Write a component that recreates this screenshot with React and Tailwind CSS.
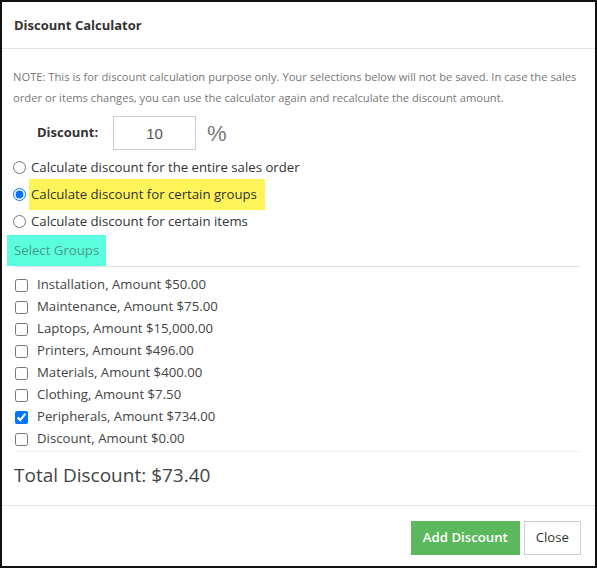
import { useState } from "react";

const groups = [
  { name: "Installation", amount: "$50.00" },
  { name: "Maintenance", amount: "$75.00" },
  { name: "Laptops", amount: "$15,000.00" },
  { name: "Printers", amount: "$496.00" },
  { name: "Materials", amount: "$400.00" },
  { name: "Clothing", amount: "$7.50" },
  { name: "Peripherals", amount: "$734.00", checked: true },
  { name: "Discount", amount: "$0.00" },
];

const modes = [
  "Calculate discount for the entire sales order",
  "Calculate discount for certain groups",
  "Calculate discount for certain items",
];

export default function App() {
  const [mode, setMode] = useState(1);

  return (
    <div className="h-[568px] w-[597px] border-2 border-[#111] bg-white font-['Open_Sans',sans-serif] text-[#333]">
      <div className="flex h-[47px] items-center border-b border-[#e5e5e5] px-[12px] pt-[1px]">
        <h2 className="text-[13px] font-bold text-[#333]">Discount Calculator</h2>
      </div>

      <div className="px-[11px] pt-[17px]">
        <p className="text-[11.2px] leading-[21px] text-[#777]">
          NOTE: This is for discount calculation purpose only. Your selections below will not be saved. In case the sales
          order or items changes, you can use the calculator again and recalculate the discount amount.
        </p>

        <div className="mt-[8px] flex h-[34px] items-center">
          <label className="w-[100px] pl-[24px] text-[13px] font-bold">Discount:</label>
          <input
            defaultValue="10"
            className="h-[34px] w-[83px] border border-[#ccc] text-center font-['Liberation_Sans',sans-serif] text-[15px] text-[#555] outline-none"
          />
          <span className="ml-[11px] font-['Liberation_Sans',sans-serif] text-[22px] text-[#777]">%</span>
        </div>

        <div className="mt-[4px] flex flex-col">
          {modes.map((m, i) => (
            <label key={m} className="flex h-[27px] items-center">
              <input
                type="radio"
                name="mode"
                checked={mode === i}
                onChange={() => setMode(i)}
                className="m-0 h-[13px] w-[13px] accent-[#0075ff]"
              />
              <span
                className={`ml-[3px] flex h-[31px] items-center px-[2px] text-[13.2px] ${
                  i === 1 ? "bg-[#fff35a] pr-[8px]" : ""
                }`}
              >
                {m}
              </span>
            </label>
          ))}
        </div>

        <div className="-ml-[6px] flex">
          <span className="flex h-[31px] items-center bg-[#5bffdf] px-[7px] text-[13.2px] text-[#4a9a8a]">Select Groups</span>
        </div>

        <div className="ml-[2px] mr-[4px] border-t border-[#e0e0e0] pt-[7px]">
          {groups.map((g) => (
            <label key={g.name} className="flex h-[22px] items-center">
              <input
                type="checkbox"
                defaultChecked={g.checked}
                className="m-0 h-[13px] w-[13px] accent-[#0075ff]"
              />
              <span className="ml-[9px] text-[13.2px] text-[#444]">
                {g.name}, Amount {g.amount}
              </span>
            </label>
          ))}
          <div className="mt-[1px] border-t border-[#eeeeee]" />
        </div>

        <div className="h-[53px] pl-[1px] pt-[9px]">
          <span className="text-[19px] leading-[28px] text-[#444]">Total Discount: $73.40</span>
        </div>
      </div>

      <div className="flex h-[61px] items-start justify-end gap-[4px] border-t border-[#e5e5e5] px-[14px] pt-[15px]">
        <button className="h-[34px] bg-[#5cb85c] px-[12px] text-[13.2px] font-semibold text-white">Add Discount</button>
        <button className="h-[34px] border border-[#ccc] bg-white px-[11px] text-[13.2px] text-[#333]">Close</button>
      </div>
    </div>
  );
}
